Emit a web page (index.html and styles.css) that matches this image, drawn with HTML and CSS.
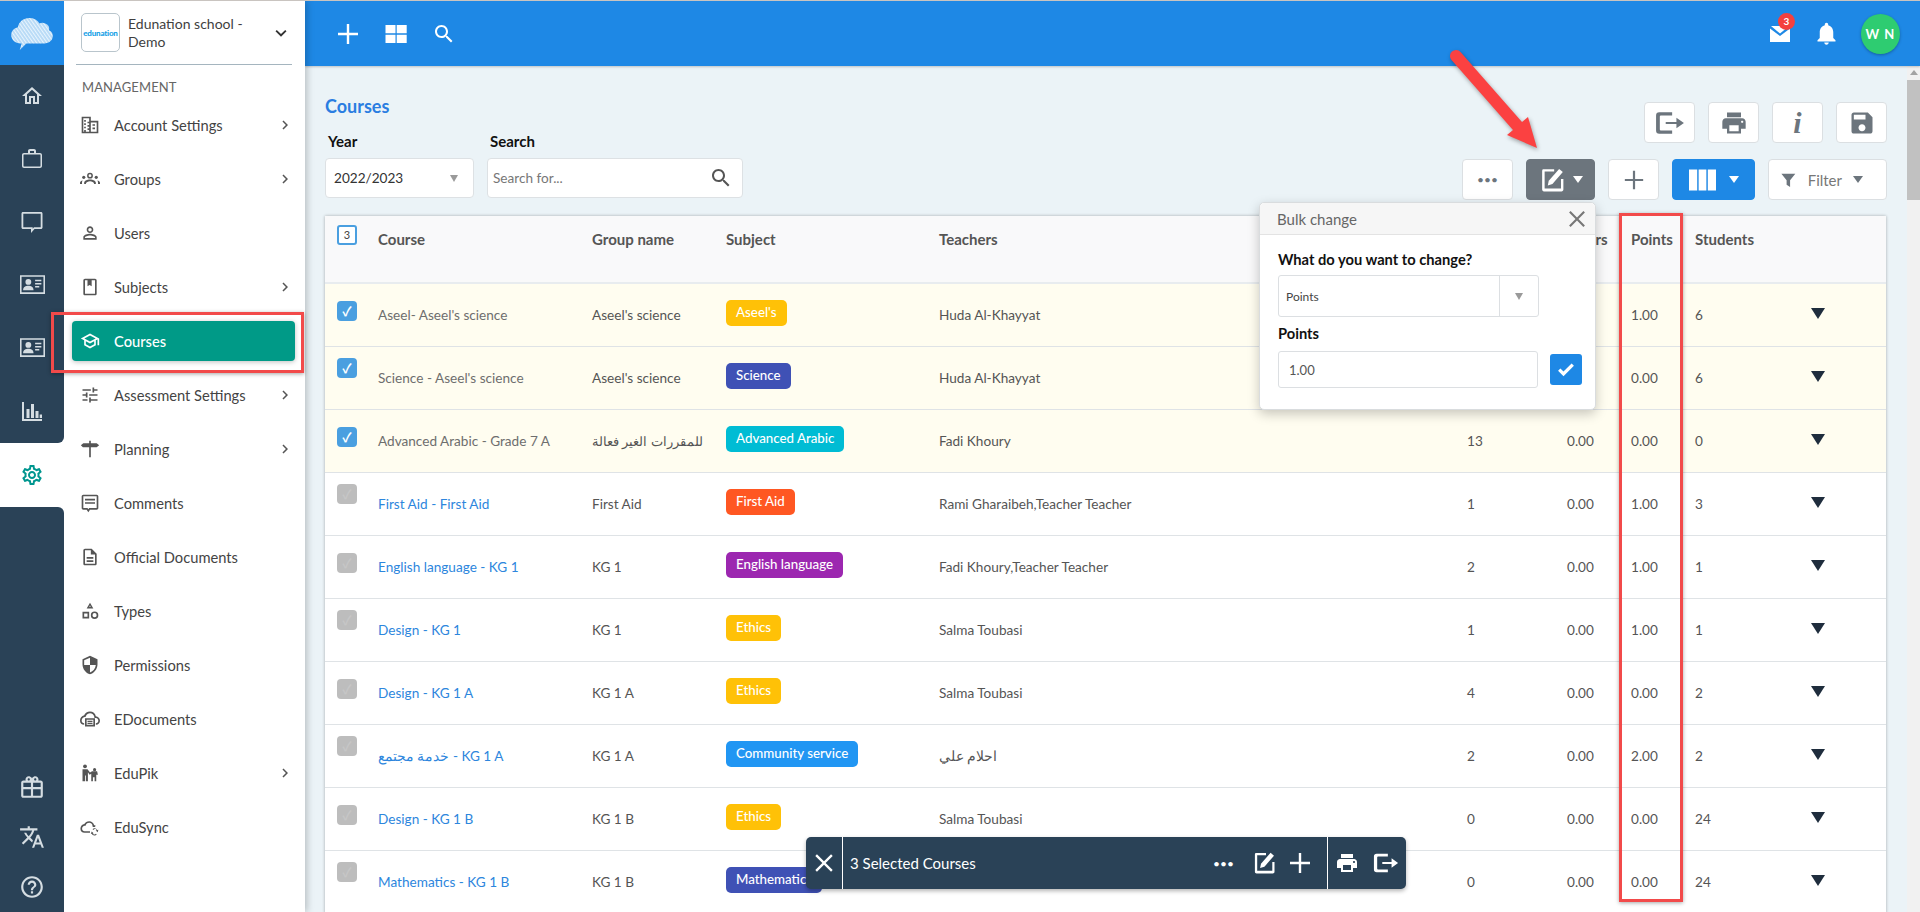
FILE: index.html
```html
<!DOCTYPE html>
<html lang="en">
<head>
<meta charset="utf-8">
<title>Courses</title>
<link rel="stylesheet" href="styles.css">
</head>
<body>
<svg class="defs" width="0" height="0" aria-hidden="true">
  <symbol id="i-gear" viewBox="0 0 24 24"><path d="M19.43 12.98c.04-.32.07-.64.07-.98 0-.34-.03-.66-.07-.98l2.11-1.65c.19-.15.24-.42.12-.64l-2-3.46c-.09-.16-.26-.25-.44-.25-.06 0-.12.01-.17.03l-2.49 1c-.52-.4-1.08-.73-1.69-.98l-.38-2.65C14.46 2.18 14.25 2 14 2h-4c-.25 0-.46.18-.49.42l-.38 2.65c-.61.25-1.17.59-1.69.98l-2.49-1c-.06-.02-.12-.03-.18-.03-.17 0-.34.09-.43.25l-2 3.46c-.13.22-.07.49.12.64l2.11 1.65c-.04.32-.07.65-.07.98 0 .33.03.66.07.98l-2.11 1.65c-.19.15-.24.42-.12.64l2 3.46c.09.16.26.25.44.25.06 0 .12-.01.17-.03l2.49-1c.52.4 1.08.73 1.69.98l.38 2.65c.03.24.24.42.49.42h4c.25 0 .46-.18.49-.42l.38-2.65c.61-.25 1.17-.59 1.69-.98l2.49 1c.06.02.12.03.18.03.17 0 .34-.09.43-.25l2-3.46c.12-.22.07-.49-.12-.64l-2.11-1.65zm-1.98-1.71c.04.31.05.52.05.73 0 .21-.02.43-.05.73l-.14 1.13.89.7 1.08.84-.7 1.21-1.27-.51-1.04-.42-.9.68c-.43.32-.84.56-1.25.73l-1.06.43-.16 1.13-.2 1.35h-1.4l-.19-1.35-.16-1.13-1.06-.43c-.43-.18-.83-.41-1.23-.71l-.91-.7-1.06.43-1.27.51-.7-1.21 1.08-.84.89-.7-.14-1.13c-.03-.31-.05-.54-.05-.74s.02-.43.05-.73l.14-1.13-.89-.7-1.08-.84.7-1.21 1.27.51 1.04.42.9-.68c.43-.32.84-.56 1.25-.73l1.06-.43.16-1.13.2-1.35h1.39l.19 1.35.16 1.13 1.06.43c.43.18.83.41 1.23.71l.91.7 1.06-.43 1.27-.51.7 1.21-1.07.85-.89.7.14 1.13zM12 8c-2.21 0-4 1.79-4 4s1.79 4 4 4 4-1.79 4-4-1.79-4-4-4zm0 6c-1.1 0-2-.9-2-2s.9-2 2-2 2 .9 2 2-.9 2-2 2z"/></symbol>
  <symbol id="i-id" viewBox="0 0 24 18"><path fill-rule="evenodd" d="M0 0h24v18H0zM1.500 1.500v15h21v-15z"/><circle cx="8" cy="6.500" r="2.800"/><path d="M3 14.500c0-3 2.500-4.200 5-4.200s5 1.200 5 4.200zM14.500 4.500h6v1.400h-6zM14.500 7.500h6v1.400h-6zM14.500 10.500h4v1.400h-4z"/></symbol>
  <symbol id="i-chev" viewBox="0 0 24 24"><path d="M8.600 16.600 13.200 12 8.600 7.400 10 6l6 6-6 6z"/></symbol>
  <symbol id="i-export" viewBox="0 0 28 24"><path d="M4 2h12v3H5.500a1 1 0 0 0-1 1v12a1 1 0 0 0 1 1H16v3H4a3 3 0 0 1-3-3V5a3 3 0 0 1 3-3z"/><path d="M10 11h10V7l7 5-7 5v-4H10z"/></symbol>
  <symbol id="i-print" viewBox="0 0 24 24"><path d="M19 8H5c-1.660 0-3 1.340-3 3v6h4v4h12v-4h4v-6c0-1.660-1.340-3-3-3zm-3 11H8v-5h8v5zm3-7c-.550 0-1-.450-1-1s.450-1 1-1 1 .450 1 1-.450 1-1 1zm-1-9H6v4h12V3z"/></symbol>
  <symbol id="i-edit" viewBox="0 0 24 24"><path d="M3.500 2H14v2.200H5.200v15.600h15.100V11h2.200v9.800c0 .900-.700 1.700-1.700 1.700H4.600c-1 0-1.700-.800-1.700-1.700V3.700C2.900 2.800 3.500 2 3.500 2z"/><path d="M9 12.800 18.600 1.800l3.400 2.900-9.600 11-4.300 1.300z"/></symbol>
  <symbol id="i-plus" viewBox="0 0 24 24"><path d="M10.800 2h2.400v8.800H22v2.400h-8.800V22h-2.400v-8.800H2v-2.400h8.800z"/></symbol>
  <symbol id="i-close" viewBox="0 0 24 24"><path d="M4.300 2.500 12 10.200l7.700-7.700 1.800 1.800-7.700 7.700 7.700 7.700-1.800 1.800-7.700-7.700-7.700 7.700-1.800-1.800 7.700-7.700-7.700-7.700z"/></symbol>
  <symbol id="i-search" viewBox="0 0 24 24"><path d="M15.500 14h-.79l-.28-.27C15.410 12.590 16 11.110 16 9.500 16 5.910 13.090 3 9.500 3S3 5.910 3 9.500 5.910 16 9.500 16c1.610 0 3.090-.590 4.230-1.570l.27.280v.790l5 4.990L20.490 19l-4.990-5zm-6 0C7.010 14 5 11.990 5 9.500S7.010 5 9.500 5 14 7.010 14 9.500 11.990 14 9.500 14z"/></symbol>
</svg>

<nav class="rail">
  <div class="rail-logo">
    <svg width="44" height="34" viewBox="0 0 46 36"><defs><pattern id="hatch" width="3" height="3" patternUnits="userSpaceOnUse" patternTransform="rotate(-35)"><rect width="3" height="3" fill="#b5d9f6"/><rect width="1.200" height="3" fill="#e8f4fd"/></pattern></defs><path fill="url(#hatch)" d="M11 29C5 29 1 25 1 20c0-4 3-7 7-8C9 6 14 2 20 2c5 0 9 2 11 6 2-1 4-1 6 0 3 1 5 4 4 7 3 1 4 4 4 6 0 5-4 8-9 8H17l-7 7 2-7z"/></svg>
  </div>
  <div class="rail-top">
    <a class="rail-icon"><svg class="ri" viewBox="0 0 24 24"><path d="M12 5.690l5 4.500V18h-2v-6H9v6H7v-7.810l5-4.500M12 3 2 12h3v8h6v-6h2v6h6v-8h3z"/></svg></a>
    <a class="rail-icon"><svg class="ri" viewBox="0 0 24 24"><path d="M20 6h-4V4c0-1.110-.890-2-2-2h-4c-1.110 0-2 .890-2 2v2H4c-1.110 0-2 .890-2 2v11c0 1.110.890 2 2 2h16c1.110 0 2-.890 2-2V8c0-1.110-.890-2-2-2zm-6 0h-4V4h4zm6 13.500H4c-.300 0-.500-.200-.500-.500V8c0-.300.200-.500.500-.500h16c.300 0 .500.200.500.500v11c0 .300-.200.500-.500.500z"/></svg></a>
    <a class="rail-icon"><svg class="ri" viewBox="0 0 24 24"><path fill-rule="evenodd" d="M3 2h18c.900 0 1.500.700 1.500 1.500v14c0 .900-.700 1.500-1.500 1.500h-6.500L11 23v-4H3c-.900 0-1.500-.700-1.500-1.500v-14C1.500 2.600 2.100 2 3 2zm.300 1.800v13.400h9.400v1.500l1.300-1.500h6.700V3.800z"/></svg></a>
    <a class="rail-icon"><svg class="ri-id"><use href="#i-id"/></svg></a>
    <a class="rail-icon"><svg class="ri-id"><use href="#i-id"/></svg></a>
    <a class="rail-icon"><svg class="ri" viewBox="0 0 24 24"><path d="M2 3h2v17h18v2H2zM6.500 10h3v9h-3zM11 5h3v14h-3zM15.500 12h3v7h-3zM19.700 15.500h2.300V19h-2.300z"/></svg></a>
  </div>
  <a class="rail-active"><svg class="ri" viewBox="0 0 24 24"><use href="#i-gear"/></svg></a>
  <div class="rail-bottom">
    <a class="rail-icon low"><svg class="ri big" viewBox="0 0 24 24"><path d="M20 6h-2.200c.100-.300.200-.700.200-1 0-1.700-1.300-3-3-3-1 0-1.900.500-2.500 1.300L12 4l-.500-.700C10.900 2.500 10 2 9 2 7.300 2 6 3.300 6 5c0 .300.100.700.200 1H4C2.900 6 2 6.900 2 8v12c0 1.100.900 2 2 2h16c1.100 0 2-.900 2-2V8c0-1.100-.900-2-2-2zm-5-2c.600 0 1 .400 1 1s-.400 1-1 1-1-.400-1-1 .400-1 1-1zM9 4c.600 0 1 .400 1 1s-.400 1-1 1-1-.400-1-1 .400-1 1-1zm2 16H4v-6h7zm0-8H4V8h7zm9 8h-7v-6h7zm0-8h-7V8h7z"/></svg></a>
    <a class="rail-icon low"><svg class="ri big" viewBox="0 0 24 24"><path d="m12.870 15.070-2.540-2.510.030-.030c1.740-1.940 2.980-4.170 3.710-6.530H17V4h-7V2H8v2H1v1.990h11.170C11.500 7.920 10.440 9.750 9 11.350 8.070 10.320 7.300 9.190 6.690 8h-2c.730 1.630 1.730 3.170 2.980 4.560l-5.090 5.020L4 19l5-5 3.110 3.110zM18.500 10h-2L12 22h2l1.120-3h4.750L21 22h2zm-2.620 7 1.620-4.330L19.120 17z"/></svg></a>
    <a class="rail-icon low"><svg class="ri big" viewBox="0 0 24 24"><path d="M11 18h2v-2h-2zm1-16C6.480 2 2 6.480 2 12s4.480 10 10 10 10-4.480 10-10S17.520 2 12 2zm0 18c-4.410 0-8-3.590-8-8s3.590-8 8-8 8 3.590 8 8-3.590 8-8 8zm0-14c-2.210 0-4 1.790-4 4h2c0-1.100.900-2 2-2s2 .900 2 2c0 2-3 1.750-3 5h2c0-2.250 3-2.500 3-5 0-2.210-1.790-4-4-4z"/></svg></a>
  </div>
</nav>

<aside class="side">
  <div class="school">
    <div class="school-logo">edunation</div>
    <div class="school-name">Edunation school - Demo</div>
    <svg class="school-chev" viewBox="0 0 24 24"><path d="M7.400 8.600 12 13.200l4.600-4.600L18 10l-6 6-6-6z"/></svg>
  </div>
  <div class="side-label">MANAGEMENT</div>
  <ul class="menu">
    <li class="menu-item"><svg class="mi" viewBox="0 0 24 24"><path d="M2 2h11v5h9v15H2zm2 2v16h7v-2H9v-2h2v-2H9v-2h2v-2H9V8h2V4zM5 6h2v2H5zm0 4h2v2H5zm0 4h2v2H5zm0 4h2v2H5zm8-9v11h7V9zm2 2h3v2h-3zm0 4h3v2h-3z"/></svg><span class="ml">Account Settings</span><svg class="chev"><use href="#i-chev"/></svg></li>
    <li class="menu-item"><svg class="mi" viewBox="0 0 24 24"><circle cx="12" cy="8" r="2.600" fill="none" stroke="currentColor" stroke-width="1.800"/><circle cx="4.500" cy="10" r="1.900"/><circle cx="19.500" cy="10" r="1.900"/><path d="M5 18v-1.500c0-2.500 3.500-4 7-4s7 1.500 7 4V18h-2c0-2-3-3.300-5-3.300S7 16 7 18zM0 18v-1.500c0-1.400 1.500-2.500 3.200-2.700-.600.700-.800 1.500-.800 2.400V18zM24 18v-1.500c0-1.400-1.500-2.500-3.200-2.700.600.700.800 1.500.800 2.400V18z"/></svg><span class="ml">Groups</span><svg class="chev"><use href="#i-chev"/></svg></li>
    <li class="menu-item"><svg class="mi" viewBox="0 0 24 24"><path d="M12 5.900a2.100 2.100 0 1 1 0 4.200 2.100 2.100 0 0 1 0-4.200m0 9c2.970 0 6.100 1.460 6.100 2.100v1.100H5.900V17c0-.640 3.130-2.100 6.100-2.100M12 4C9.790 4 8 5.790 8 8s1.790 4 4 4 4-1.790 4-4-1.790-4-4-4zm0 9c-2.670 0-8 1.340-8 4v3h16v-3c0-2.660-5.330-4-8-4z"/></svg><span class="ml">Users</span></li>
    <li class="menu-item"><svg class="mi" viewBox="0 0 24 24"><path d="M18 2H6c-1.100 0-2 .900-2 2v16c0 1.100.900 2 2 2h12c1.100 0 2-.900 2-2V4c0-1.100-.900-2-2-2zM6 4h3v7l2.500-1.500L14 11V4h4v16H6z"/></svg><span class="ml">Subjects</span><svg class="chev"><use href="#i-chev"/></svg></li>
    <li class="menu-item active"><svg class="mi" viewBox="0 0 24 24"><path d="M12 3 1 9l4 2.180v6L12 21l7-3.820v-6l2-1.090V17h2V9zm6.820 6L12 12.720 5.180 9 12 5.280zM17 16l-5 2.720L7 16v-3.730L12 15l5-2.730z"/></svg><span class="ml">Courses</span></li>
    <li class="menu-item"><svg class="mi" viewBox="0 0 24 24"><path d="M3 17v2h6v-2zM3 5v2h10V5zm10 16v-2h8v-2h-8v-2h-2v6zM7 9v2H3v2h4v2h2V9zm14 4v-2H11v2zm-6-4h2V7h4V5h-4V3h-2z"/></svg><span class="ml">Assessment Settings</span><svg class="chev"><use href="#i-chev"/></svg></li>
    <li class="menu-item"><svg class="mi" viewBox="0 0 24 24"><path d="M11 2h2v3h7l3 2.500L20 10h-7v12h-2V10H3.500L1 7.500 4 5h7z"/></svg><span class="ml">Planning</span><svg class="chev"><use href="#i-chev"/></svg></li>
    <li class="menu-item"><svg class="mi" viewBox="0 0 24 24"><path d="M20 2H4c-1.100 0-2 .900-2 2v14c0 1.100.900 2 2 2h4l2 3 2-3h8c1.100 0 2-.900 2-2V4c0-1.100-.900-2-2-2zm0 16h-9l-1 1.500L9 18H4V4h16zM6 7h12v2H6zm0 4h12v2H6z"/></svg><span class="ml">Comments</span></li>
    <li class="menu-item"><svg class="mi" viewBox="0 0 24 24"><path d="M8 16h8v2H8zm0-4h8v2H8zm6-10H6c-1.100 0-2 .900-2 2v16c0 1.100.890 2 1.990 2H18c1.100 0 2-.900 2-2V8zm4 18H6V4h7v5h5z"/></svg><span class="ml">Official Documents</span></li>
    <li class="menu-item"><svg class="mi" viewBox="0 0 24 24"><path d="M12 2 8 9h8zm0 3.500L13 7h-2zM3 13h8v8H3zm2 2v4h4v-4zM17.500 12.500a4.500 4.500 0 1 1 0 9 4.500 4.500 0 0 1 0-9zm0 2a2.500 2.500 0 1 0 0 5 2.500 2.500 0 0 0 0-5z"/></svg><span class="ml">Types</span></li>
    <li class="menu-item"><svg class="mi" viewBox="0 0 24 24"><path d="M12 1 3 5v6c0 5.550 3.840 10.740 9 12 5.160-1.260 9-6.450 9-12V5zm0 11h7c-.530 4.120-3.280 7.790-7 8.940V12H5V6.300l7-3.110z"/></svg><span class="ml">Permissions</span></li>
    <li class="menu-item"><svg class="mi" viewBox="0 0 24 24"><path d="M12 3c3.500 0 6.400 2.400 7 5.700 2.800.300 5 2.500 5 5.300 0 2.700-2 4.800-4.700 5h-.300v-2c1.700 0 3-1.300 3-3s-1.300-3.300-3-3.300h-1.700l-.100-1.200C16.800 7 14.600 5 12 5 9.900 5 8 6.300 7.300 8.200L6.900 9.300 5.500 9.500C3.500 9.800 2 11.700 2 14c0 1.700 1.300 3 3 3v2c-2.800 0-5-2.200-5-5 0-3 2-5.700 5-6.400C6 5 8.800 3 12 3z"/><path d="M6 11h12v10H6zm2 2v6h8v-6zm1 1h6v1.500H9zm0 2.500h6V18H9z"/></svg><span class="ml">EDocuments</span></li>
    <li class="menu-item"><svg class="mi" viewBox="0 0 24 24"><circle cx="6" cy="4" r="2.300"/><circle cx="17.500" cy="8" r="1.900"/><path d="M3 7.500h6l3 4 2.500-1.500h6l1 4h-2v8h-2v-5h-2v5h-2v-9l-2 1-2-3V22H7v-7H6v7H3z"/></svg><span class="ml">EduPik</span><svg class="chev"><use href="#i-chev"/></svg></li>
    <li class="menu-item"><svg class="mi" viewBox="0 0 24 24"><path d="M11 5c3 0 5.500 2 6 5 .600 0 1.200.100 1.800.400l-.900 1.700c-.500-.200-1-.300-1.500-.200h-1.100l-.300-1.500C14.700 8.100 13 7 11 7 9.200 7 7.700 8 7 9.600l-.300.800-1 .100C4 10.800 2.500 12.200 2.500 14c0 1.700 1.300 3 3 3H12v2H5.500C2.500 19 .500 16.800.500 14c0-2.800 2-5 4.700-5.500C6.200 6.400 8.400 5 11 5z"/><path d="M17.500 13.500c1.400 0 2.600.900 3 2.200l1.500-.500-.700 3.200-2.500-2.200 1.200-.400c-.300-.800-1.100-1.300-2-1.300-.800 0-1.500.400-1.900 1l-1-.700c.600-1 1.600-1.300 2.400-1.300zM14 17.300l2.400 2.200-1.100.400c.400.700 1.100 1.100 1.900 1.100.800 0 1.500-.400 1.900-1l1 .700c-.600.900-1.700 1.500-2.900 1.500-1.400 0-2.600-.900-3-2.100l-1.200.400z"/></svg><span class="ml">EduSync</span></li>
  </ul>
</aside>

<div class="main">
  <header class="topbar">
    <svg class="tb-ic"><use href="#i-plus"/></svg>
    <svg class="tb-ic" viewBox="0 0 24 24"><path d="M1.500 3h10v8.300h-10zM12.700 3h10v8.300h-10zM1.500 12.700h10V21h-10zM12.700 12.700h10V21h-10z"/></svg>
    <svg class="tb-ic"><use href="#i-search"/></svg>
    <div class="tb-right">
      <div class="mail"><svg class="tb-ic" viewBox="0 0 24 24"><path d="M2 6.500 12 14l10-7.500V20H2zM3 4h18l-9 7.500z"/></svg><span class="mail-badge">3</span></div>
      <svg class="tb-ic bell" viewBox="0 0 24 24"><path d="M12 22c1.100 0 2-.900 2-2h-4c0 1.100.900 2 2 2zm6-6v-5c0-3.070-1.630-5.640-4.500-6.320V4c0-.830-.670-1.500-1.500-1.500s-1.500.670-1.500 1.500v.680C7.640 5.360 6 7.920 6 11v5l-2 2v1h16v-1z"/></svg>
      <div class="avatar">W N</div>
    </div>
  </header>
  <div class="body">
    <main class="content">
      <div class="head">
        <div class="head-left">
          <h1 class="title">Courses</h1>
          <div class="filters">
            <div class="field">
              <label class="flabel">Year</label>
              <div class="year-box"><span>2022/2023</span><i class="tri"></i></div>
            </div>
            <div class="field">
              <label class="flabel">Search</label>
              <div class="search-box"><span>Search for...</span><svg class="s-ic"><use href="#i-search"/></svg></div>
            </div>
          </div>
        </div>
        <div class="head-right">
          <div class="actions">
            <button class="btn"><svg class="b-ic ex"><use href="#i-export"/></svg></button>
            <button class="btn"><svg class="b-ic"><use href="#i-print"/></svg></button>
            <button class="btn"><span class="info">i</span></button>
            <button class="btn"><svg class="b-ic" viewBox="0 0 24 24"><path d="M17 3H5c-1.110 0-2 .900-2 2v14c0 1.100.890 2 2 2h14c1.100 0 2-.900 2-2V7zm-5 16c-1.660 0-3-1.340-3-3s1.340-3 3-3 3 1.340 3 3-1.340 3-3 3zm3-10H5V5h10z"/></svg></button>
          </div>
          <div class="actions lower">
            <button class="btn dots">•••</button>
            <button class="btn btn-edit"><svg class="b-ic e"><use href="#i-edit"/></svg><i class="caret"></i></button>
            <button class="btn"><svg class="b-ic p"><use href="#i-plus"/></svg></button>
            <button class="btn btn-cols"><svg class="cols" viewBox="0 0 28 24"><path d="M0 1h8.500v22H0zM10 1h8v22h-8zM19.500 1H28v22h-8.500z"/></svg><i class="caret"></i></button>
            <button class="btn btn-filter"><svg class="f-ic" viewBox="0 0 24 24"><path d="M2 3h20l-7.500 9.500V22l-5-3v-6.500z"/></svg><span>Filter</span><i class="caret dark"></i></button>
          </div>
        </div>
      </div>

      <table class="grid">
        <colgroup><col class="c1"><col class="c2"><col class="c3"><col class="c4"><col class="c5"><col class="c6"><col class="c7"><col class="c8"><col class="c9"><col class="c10"></colgroup>
        <thead>
          <tr><th><span class="count">3</span></th><th>Course</th><th>Group name</th><th>Subject</th><th>Teachers</th><th></th><th>Hours</th><th>Points</th><th>Students</th><th></th></tr>
        </thead>
        <tbody>
          <tr class="sel"><td><span class="cb on">✓</span></td><td>Aseel- Aseel's science</td><td>Aseel's science</td><td><span class="tag amber">Aseel's</span></td><td>Huda Al-Khayyat</td><td></td><td></td><td>1.00</td><td>6</td><td><i class="down"></i></td></tr>
          <tr class="sel"><td><span class="cb on">✓</span></td><td>Science - Aseel's science</td><td>Aseel's science</td><td><span class="tag indigo">Science</span></td><td>Huda Al-Khayyat</td><td></td><td></td><td>0.00</td><td>6</td><td><i class="down"></i></td></tr>
          <tr class="sel"><td><span class="cb on">✓</span></td><td>Advanced Arabic - Grade 7 A</td><td class="rtl"><bdi>للمقررات الغير فعالة</bdi></td><td><span class="tag cyan">Advanced Arabic</span></td><td>Fadi Khoury</td><td>13</td><td>0.00</td><td>0.00</td><td>0</td><td><i class="down"></i></td></tr>
          <tr><td><span class="cb">✓</span></td><td class="link">First Aid - First Aid</td><td>First Aid</td><td><span class="tag orange">First Aid</span></td><td>Rami Gharaibeh,Teacher Teacher</td><td>1</td><td>0.00</td><td>1.00</td><td>3</td><td><i class="down"></i></td></tr>
          <tr><td><span class="cb">✓</span></td><td class="link">English language - KG 1</td><td>KG 1</td><td><span class="tag purple">English language</span></td><td>Fadi Khoury,Teacher Teacher</td><td>2</td><td>0.00</td><td>1.00</td><td>1</td><td><i class="down"></i></td></tr>
          <tr><td><span class="cb">✓</span></td><td class="link">Design - KG 1</td><td>KG 1</td><td><span class="tag amber">Ethics</span></td><td>Salma Toubasi</td><td>1</td><td>0.00</td><td>1.00</td><td>1</td><td><i class="down"></i></td></tr>
          <tr><td><span class="cb">✓</span></td><td class="link">Design - KG 1 A</td><td>KG 1 A</td><td><span class="tag amber">Ethics</span></td><td>Salma Toubasi</td><td>4</td><td>0.00</td><td>0.00</td><td>2</td><td><i class="down"></i></td></tr>
          <tr><td><span class="cb">✓</span></td><td class="link"><bdi>خدمة مجتمع</bdi> - KG 1 A</td><td>KG 1 A</td><td><span class="tag blue">Community service</span></td><td>احلام علي</td><td>2</td><td>0.00</td><td>2.00</td><td>2</td><td><i class="down"></i></td></tr>
          <tr><td><span class="cb">✓</span></td><td class="link">Design - KG 1 B</td><td>KG 1 B</td><td><span class="tag amber">Ethics</span></td><td>Salma Toubasi</td><td>0</td><td>0.00</td><td>0.00</td><td>24</td><td><i class="down"></i></td></tr>
          <tr><td><span class="cb">✓</span></td><td class="link">Mathematics - KG 1 B</td><td>KG 1 B</td><td><span class="tag indigo">Mathematics</span></td><td></td><td>0</td><td>0.00</td><td>0.00</td><td>24</td><td><i class="down"></i></td></tr>
        </tbody>
      </table>
    </main>
    <div class="scrollbar"><i class="sb-up"></i><div class="sb-thumb"></div></div>
  </div>
</div>

<section class="bulk">
  <div class="bulk-head"><span>Bulk change</span><svg class="bulk-x"><use href="#i-close"/></svg></div>
  <div class="bulk-body">
    <div class="bulk-label">What do you want to change?</div>
    <div class="bulk-select"><span class="bs-val">Points</span><span class="bs-arrow"><i class="tri"></i></span></div>
    <div class="bulk-label second">Points</div>
    <div class="bulk-row">
      <div class="bulk-input">1.00</div>
      <button class="bulk-ok"><svg viewBox="0 0 24 24"><path d="M9 19.500 2.500 13l2.800-2.800L9 13.900l9.700-9.700 2.800 2.800z"/></svg></button>
    </div>
  </div>
</section>

<div class="selbar">
  <span class="sb-close"><svg><use href="#i-close"/></svg></span>
  <span class="sb-text">3 Selected Courses</span>
  <span class="sb-tools">
    <span class="sb-dots">•••</span>
    <svg class="sb-ic"><use href="#i-edit"/></svg>
    <svg class="sb-ic"><use href="#i-plus"/></svg>
  </span>
  <span class="sb-end">
    <svg class="sb-ic"><use href="#i-print"/></svg>
    <svg class="sb-ic wide"><use href="#i-export"/></svg>
  </span>
</div>

<div class="mark mark-courses"></div>
<div class="mark mark-points"></div>
<svg class="arrow" width="90" height="100" viewBox="0 0 90 100"><path fill="#fb4141" d="M10.500 2 72 72l6-5 9 31-30-13 6-5L1.500 10A6 6 0 0 1 10.500 2z"/></svg>
</body>
</html>
```
FILE: styles.css
```css
* { box-sizing: border-box; }
html, body { margin: 0; height: 100%; }
body {
  position: relative;
  display: flex;
  height: 912px;
  overflow: hidden;
  border-top: 1px solid #c9c4c0;
  font-family: Lato, "Noto Sans", "Noto Sans CJK SC", sans-serif;
  font-size: 13px;
  color: #555;
  background: #ebf3f7;
}
.defs { position: absolute; }
button { font-family: inherit; cursor: pointer; }

/* rail */
.rail { width: 64px; flex: none; display: flex; flex-direction: column; background: #fff; position: relative; z-index: 3; }
.rail-logo { height: 64px; display: flex; align-items: center; justify-content: center; background: #1e88e5; flex: none; }
.rail-top { height: 378px; flex: none; background: #2a4257; border-bottom-right-radius: 6px; display: flex; flex-direction: column; }
.rail-top .rail-icon:first-child { margin-top: -1px; }
.rail-icon { height: 63px; display: flex; align-items: center; justify-content: center; color: #d5dde2; flex: none; }
.rail-icon.low { height: 50px; }
.ri { width: 24px; height: 24px; fill: currentColor; }
.ri.big { width: 26px; height: 26px; }
.ri-id { width: 25px; height: 19px; fill: currentColor; }
.rail-active { height: 64px; flex: none; display: flex; align-items: center; justify-content: center; color: #00968f; }
.rail-bottom { flex: 1; background: #2a4257; border-top-right-radius: 6px; display: flex; flex-direction: column; justify-content: flex-end; }

/* side menu */
.side { width: 241px; flex: none; background: #fff; box-shadow: 2px 0 7px rgba(0,0,0,.22); position: relative; z-index: 2; }
.school { height: 64px; margin: 0 13px 0 12px; display: flex; align-items: center; border-bottom: 1px solid #a5b5bf; padding-left: 5px; }
.school-logo { width: 39px; height: 39px; flex: none; border: 1px solid #b9c5cc; border-radius: 5px; font-size: 8px; font-weight: 900; color: #15a0e6; display: flex; align-items: center; justify-content: center; letter-spacing: -.2px; }
.school-name { width: 124px; margin-left: 8px; font-size: 14px; line-height: 18px; color: #3f3f3f; }
.school-chev { width: 22px; height: 22px; margin-left: auto; fill: #333; }
.side-label { height: 33px; padding: 14px 0 0 18px; font-size: 13px; line-height: 16px; color: #666; letter-spacing: .1px; }
.menu { list-style: none; margin: 0; padding: 7px 0 0; display: flex; flex-direction: column; gap: 14px; }
.menu-item { height: 40px; margin: 0 10px 0 8px; padding: 0 1px 0 8px; display: flex; align-items: center; font-size: 14.7px; color: #444; border-radius: 4px; }
.mi { width: 20px; height: 20px; flex: none; fill: currentColor; margin-right: 14px; color: #555; }
.ml { flex: 1; }
.chev { width: 18px; height: 18px; fill: #555; }
.menu-item.active { background: #009a87; color: #fff; box-shadow: 0 1px 5px rgba(0,0,0,.25); font-weight: 500; }
.menu-item.active .mi { color: #fff; }

/* top bar */
.main { flex: 1; min-width: 0; display: flex; flex-direction: column; }
.topbar { height: 65px; flex: none; background: #1e88e5; display: flex; align-items: center; padding: 0 20px 0 31px; gap: 24px; box-shadow: 0 1px 2px rgba(0,0,0,.2); position: relative; z-index: 1; }
.tb-ic { width: 24px; height: 24px; fill: #fff; flex: none; }
.tb-ic.bell { width: 27px; height: 27px; }
.tb-right { margin-left: auto; display: flex; align-items: center; gap: 21px; }
.mail { position: relative; display: flex; }
.mail-badge { position: absolute; top: -9px; left: 10px; width: 17px; height: 17px; border-radius: 50%; background: #f4403f; color: #fff; font-size: 10px; font-weight: 700; display: flex; align-items: center; justify-content: center; }
.avatar { width: 39px; height: 40px; border-radius: 50%; background: #2ecc71; color: #fff; font-size: 13px; font-weight: 700; letter-spacing: 1px; display: flex; align-items: center; justify-content: center; box-shadow: 0 1px 3px rgba(0,0,0,.3); }

/* content */
.body { flex: 1; min-height: 0; display: flex; }
.content { flex: 1; min-width: 0; padding: 30px 20px 0 20px; }
.scrollbar { width: 13px; flex: none; background: #f1f1f1; position: relative; padding-top: 14px; }
.sb-up { position: absolute; top: 4px; left: 3px; border: 4px solid transparent; border-top: 0; border-bottom: 5px solid #a3a3a3; }
.sb-thumb { height: 120px; background: #c1c1c1; }
.head { display: flex; justify-content: space-between; margin-bottom: 15px; height: 105px; }
.head-left { display: flex; flex-direction: column; }
.title { margin: 0; font-size: 18px; line-height: 20px; font-weight: 700; color: #2a7de1; }
.filters { display: flex; gap: 13px; margin-top: 15px; }
.field { display: flex; flex-direction: column; }
.flabel { font-size: 15px; line-height: 20px; font-weight: 700; color: #111; margin-bottom: 7px; padding-left: 3px; }
.year-box { width: 149px; height: 40px; background: #fff; border: 1px solid #dde1e4; border-radius: 4px; display: flex; align-items: center; justify-content: space-between; padding: 0 15px 0 8px; font-size: 13.6px; color: #333; }
.search-box { width: 256px; height: 40px; background: #fff; border: 1px solid #dde1e4; border-radius: 4px; display: flex; align-items: center; justify-content: space-between; padding: 0 9px 0 5px; font-size: 13.6px; color: #777; }
.s-ic { width: 24px; height: 24px; fill: #555; }
.tri { display: block; border: 4.5px solid transparent; border-top: 7px solid #9a9a9a; border-bottom: 0; }
.head-right { display: flex; flex-direction: column; align-items: flex-end; gap: 16px; padding-top: 6px; }
.actions { display: flex; gap: 13px; }
.btn { width: 51px; height: 41px; padding: 0; border: 1px solid #dbdfe2; border-radius: 4px; background: #fff; display: flex; align-items: center; justify-content: center; gap: 8px; color: #6c757d; }
.b-ic { width: 28px; height: 28px; fill: #6c757d; }
.b-ic.ex { width: 30px; height: 26px; }
.b-ic.p { width: 22px; height: 22px; }
.info { font-family: "Liberation Serif", serif; font-size: 30px; font-style: italic; font-weight: 700; line-height: 1; }
.dots { font-size: 12px; color: #6c757d; }
.btn-edit { width: 69px; background: #6c757d; border-color: #6c757d; }
.btn-edit .b-ic { fill: #fff; width: 26px; height: 26px; }
.btn-cols { width: 83px; background: #1e88e5; border-color: #1e88e5; gap: 13px; }
.cols { width: 27px; height: 24px; fill: #fff; }
.btn-filter { width: 119px; gap: 11px; font-size: 15px; color: #777; justify-content: flex-start; padding: 0 23px 0 11px; }
.f-ic { width: 18px; height: 20px; fill: #6c757d; }
.caret { display: block; border: 5px solid transparent; border-top: 7px solid #fff; border-bottom: 0; }
.caret.dark { border-top-color: #6c757d; margin-left: auto; }

/* table */
.grid { width: 1561px; table-layout: fixed; border-collapse: collapse; background: #fff; box-shadow: 0 0 3px rgba(0,0,0,.3); }
.c1 { width: 53px; } .c2 { width: 214px; } .c3 { width: 134px; } .c4 { width: 213px; } .c5 { width: 528px; }
.c6 { width: 100px; } .c7 { width: 64px; } .c8 { width: 64px; } .c9 { width: 105px; } .c10 { width: 86px; }
.grid th { height: 67px; padding: 13px 0 0; vertical-align: top; text-align: left; font-size: 15px; line-height: 20px; font-weight: 700; color: #555; background: #f9f9fa; border-bottom: 2px solid #e8ecef; }
.grid td { height: 63px; padding: 0; font-size: 13.6px; color: #555; border-bottom: 1px solid #dfe3e6; vertical-align: middle; white-space: nowrap; }
.sel td { background: #fffdf0; }
.sel td:nth-child(2) { color: #6e6e6e; }
.grid td.link { color: #2d86dd; }
.grid th:first-child, .grid td:first-child { padding-left: 12px; vertical-align: top; }
.count { display: block; width: 20px; height: 20px; margin-top: -4px; border: 2px solid #4a9fe0; border-radius: 3px; font-size: 11px; font-weight: 400; line-height: 16px; text-align: center; background: #fff; color: #444; }
.cb { display: block; width: 20px; height: 20px; border-radius: 4px; background: #bdbdbd; color: #c6c6c6; font-size: 13px; font-weight: 700; line-height: 20px; text-align: center; margin-top: 11px; }
.cb.on { background: #4a9fe0; color: #fff; }
tbody tr:nth-child(odd) .cb { margin-top: 17px; }
.tag { display: inline-block; height: 26px; line-height: 25px; padding: 0 10px; border-radius: 5px; color: #fff; font-size: 13.3px; font-weight: 500; position: relative; top: -2px; white-space: nowrap; }
.amber { background: #ffc107; } .indigo { background: #3f51b5; } .cyan { background: #00bcd4; }
.orange { background: #ff5722; } .purple { background: #9c27b0; } .blue { background: #2196f3; }
.down { display: block; margin: -3px 0 0 11px; width: 0; border: 7px solid transparent; border-top: 11px solid #1f2d3d; border-bottom: 0; }
.rtl bdi { font-size: 13px; }

/* bulk popup */
.bulk { position: absolute; left: 1259px; top: 201px; width: 337px; height: 208px; background: #fff; border: 1px solid #d9dcde; border-radius: 5px; box-shadow: 0 4px 12px rgba(0,0,0,.22); z-index: 5; }
.bulk-head { height: 32px; background: #f6f6f6; border-bottom: 1px solid #e3e3e3; border-radius: 5px 5px 0 0; display: flex; align-items: center; justify-content: space-between; padding: 0 8px 0 17px; font-size: 15px; color: #666; }
.bulk-x { width: 20px; height: 20px; fill: #777; }
.bulk-body { padding: 14px 13px 0 18px; }
.bulk-label { font-size: 14.7px; line-height: 20px; font-weight: 700; color: #111; }
.bulk-label.second { margin-top: 6px; }
.bulk-select { margin-top: 6px; width: 261px; height: 42px; border: 1px solid #dcdfe2; border-radius: 3px; display: flex; align-items: center; font-size: 12px; color: #444; }
.bs-val { flex: 1; padding-left: 7px; }
.bs-arrow { width: 39px; height: 100%; border-left: 1px solid #dcdfe2; display: flex; align-items: center; justify-content: center; }
.bulk-row { display: flex; align-items: center; gap: 12px; margin-top: 8px; }
.bulk-input { width: 261px; height: 37px; border: 1px solid #dcdfe2; border-radius: 3px; display: flex; align-items: center; padding-left: 10px; font-size: 13px; color: #555; }
.bulk-ok { width: 32px; height: 31px; padding: 0; border: 0; border-radius: 3px; background: #1e88e5; display: flex; align-items: center; justify-content: center; }
.bulk-ok svg { width: 20px; height: 20px; fill: #fff; }

/* selection bar */
.selbar { position: absolute; left: 806px; top: 836px; width: 600px; height: 52px; background: #2a4257; border-radius: 5px; box-shadow: 0 2px 4px rgba(0,0,0,.3); display: flex; align-items: center; color: #fff; z-index: 5; }
.sb-close { width: 37px; height: 100%; flex: none; border-right: 1px solid #fff; display: flex; align-items: center; justify-content: center; }
.sb-close svg { width: 22px; height: 22px; fill: #fff; }
.sb-text { flex: 1; padding-left: 7px; font-size: 15px; }
.sb-tools { display: flex; align-items: center; justify-content: flex-end; gap: 12px; padding-right: 15px; height: 100%; border-right: 1px solid #fff; }
.sb-dots { font-size: 12px; margin-right: 6px; }
.sb-ic { width: 24px; height: 24px; fill: #fff; }
.sb-ic.wide { width: 26px; }
.sb-end { display: flex; align-items: center; gap: 14px; padding: 0 7px; }

/* annotations */
.mark { position: absolute; border: 3px solid #f24a4a; box-shadow: 0 1px 4px rgba(0,0,0,.35); z-index: 6; pointer-events: none; }
.mark-courses { left: 51px; top: 311px; width: 253px; height: 61px; }
.mark-points { left: 1619px; top: 212px; width: 64px; height: 689px; }
.arrow { position: absolute; left: 1450px; top: 49px; z-index: 7; filter: drop-shadow(1px 2px 2px rgba(0,0,0,.35)); overflow: visible; }
```
